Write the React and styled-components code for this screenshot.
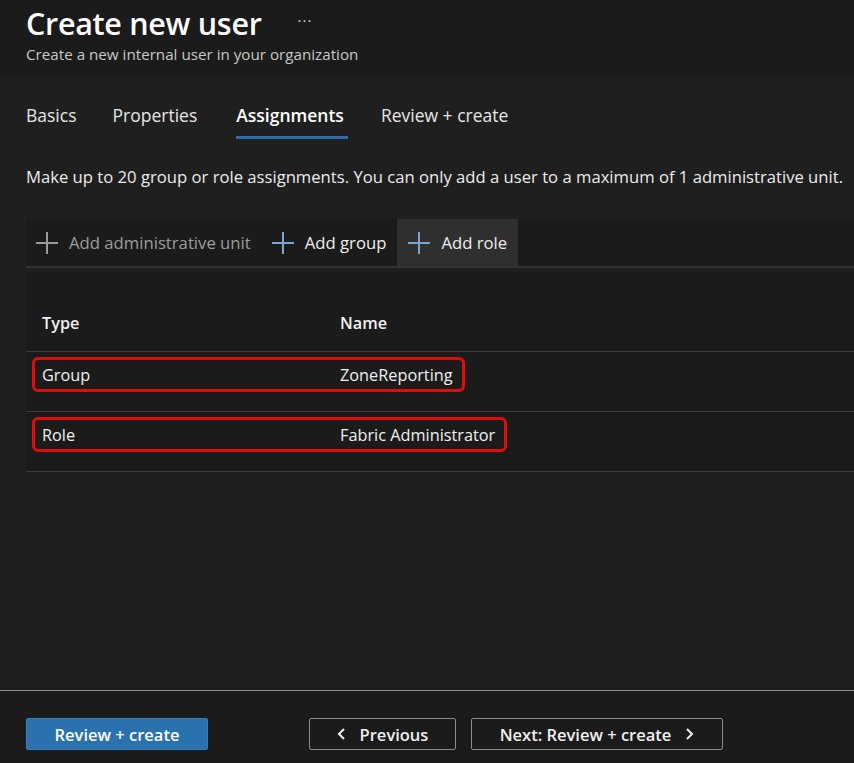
import React from 'react'
import styled, { createGlobalStyle } from 'styled-components'

const GlobalStyle = createGlobalStyle`
  html, body {
    margin: 0;
    padding: 0;
    background: #1f1f1f;
  }
  body {
    font-family: "Open Sans", "Liberation Sans", sans-serif;
    color: #f0f0f0;
  }
`

function PlusIcon({ color }) {
  return (
    <svg width="22" height="22" viewBox="0 0 22 22">
      <path d="M11 0v22M0 11h22" stroke={color} strokeWidth="2" fill="none" />
    </svg>
  )
}

function Chevron({ dir }) {
  return (
    <svg width="10" height="12" viewBox="0 0 10 12">
      <path
        d={dir === 'left' ? 'M7 1L2 6l5 5' : 'M3 1l5 5-5 5'}
        stroke="#f0f0f0"
        strokeWidth="2"
        fill="none"
      />
    </svg>
  )
}

export default function App() {
  const tabs = ['Basics', 'Properties', 'Assignments', 'Review + create']
  const rows = [
    { type: 'Group', name: 'ZoneReporting' },
    { type: 'Role', name: 'Fabric Administrator' },
  ]
  return (
    <>
      <GlobalStyle />
      <Page>
        <Header>
          <TitleRow>
            <Title>Create new user</Title>
            <More>···</More>
          </TitleRow>
          <Subtitle>Create a new internal user in your organization</Subtitle>
        </Header>

        <Content>
          <Tabs>
            {tabs.map(t => (
              <Tab key={t} active={t === 'Assignments'}>{t}</Tab>
            ))}
          </Tabs>

          <Description>
            Make up to 20 group or role assignments. You can only add a user to a maximum of 1 administrative unit.
          </Description>

          <Toolbar>
            <ToolButton disabled>
              <PlusIcon color="#9a9a9a" />
              Add administrative unit
            </ToolButton>
            <ToolButton>
              <PlusIcon color="#7aa7d0" />
              Add group
            </ToolButton>
            <ToolButton hovered>
              <PlusIcon color="#7aa7d0" />
              Add role
            </ToolButton>
          </Toolbar>

          <Table>
            <HeadRow>
              <TypeCell bold>Type</TypeCell>
              <Cell bold>Name</Cell>
            </HeadRow>
            {rows.map(r => (
              <Row key={r.type}>
                <Highlight>
                  <TypeCell>{r.type}</TypeCell>
                  <Cell>{r.name}</Cell>
                </Highlight>
              </Row>
            ))}
          </Table>
        </Content>

        <Footer>
          <PrimaryButton>Review + create</PrimaryButton>
          <NavButtons>
            <OutlineButton width="147px">
              <Chevron dir="left" />
              Previous
            </OutlineButton>
            <OutlineButton width="252px">
              Next: Review + create
              <Chevron dir="right" />
            </OutlineButton>
          </NavButtons>
        </Footer>
      </Page>
    </>
  )
}

const Page = styled.div`
  width: 854px;
  height: 763px;
  display: flex;
  flex-direction: column;
  overflow: hidden;
`

const Header = styled.header`
  background: #1b1b1b;
  height: 77px;
  padding: 0 26px;
  box-sizing: border-box;
`

const TitleRow = styled.div`
  display: flex;
  align-items: center;
  height: 46px;
`

const Title = styled.h1`
  margin: 0;
  font-size: 30.5px;
  font-weight: 600;
  color: #ffffff;
  letter-spacing: -0.3px;
`

const More = styled.span`
  margin-left: 36px;
  font-size: 15px;
  letter-spacing: 1px;
  color: #d0d0d0;
  margin-top: -6px;
`

const Subtitle = styled.div`
  font-size: 15.2px;
  color: #c8c8c8;
  margin-top: -2px;
`

const Content = styled.main`
  flex: 1;
  padding-left: 26px;
`

const Tabs = styled.nav`
  display: flex;
  gap: 36px;
  margin-top: 24px;
  height: 39px;
`

const Tab = styled.div`
  font-size: 17.5px;
  font-weight: ${p => (p.active ? 600 : 400)};
  color: ${p => (p.active ? '#ffffff' : '#e6e6e6')};
  box-sizing: border-box;
  height: 38px;
  line-height: 28px;
  margin: ${p => (p.active ? '0 -3px 0 3px' : '0')};
  padding-right: ${p => (p.active ? '4px' : '0')};
  border-bottom: 3px solid ${p => (p.active ? '#2f6ca8' : 'transparent')};
`

const Description = styled.p`
  margin: 25px 0 0;
  font-size: 16.65px;
  color: #ececec;
  height: 31px;
  white-space: nowrap;
`

const Toolbar = styled.div`
  display: flex;
  background: #1b1b1b;
  height: 47px;
  margin-top: 23px;
  border-bottom: 2px solid #333333;
`

const ToolButton = styled.div`
  display: flex;
  align-items: center;
  gap: 11px;
  padding: 0 11px;
  font-size: 16.7px;
  color: ${p => (p.disabled ? '#9d9d9d' : '#eeeeee')};
  background: ${p => (p.hovered ? '#2f2f2f' : 'transparent')};
  &:first-child {
    padding: 0 10px;
  }
`

const Table = styled.div`
  background: #1b1b1b;
  margin-top: 4px;
`

const HeadRow = styled.div`
  display: flex;
  align-items: flex-end;
  height: 80px;
  padding: 0 16px 17px;
  box-sizing: border-box;
  border-bottom: 1px solid #3c3c3c;
`

const Row = styled.div`
  display: flex;
  height: 60px;
  padding: 5px 6px 0;
  box-sizing: border-box;
  border-bottom: 1px solid #3c3c3c;
`

const Highlight = styled.div`
  display: inline-flex;
  align-items: center;
  box-sizing: border-box;
  height: 35px;
  padding: 1px 9px 0 7px;
  border: 3px solid #e00c0c;
  border-radius: 6px;
`

const TypeCell = styled.div`
  width: 298px;
  font-size: 16.3px;
  font-weight: ${p => (p.bold ? 600 : 400)};
  color: #f0f0f0;
`

const Cell = styled.div`
  font-size: 16.3px;
  font-weight: ${p => (p.bold ? 600 : 400)};
  color: #f0f0f0;
  white-space: nowrap;
`

const Footer = styled.footer`
  background: #1b1b1b;
  border-top: 1px solid #8a8a8a;
  display: flex;
  align-items: flex-start;
  padding: 27px 0 0 26px;
  box-sizing: border-box;
  height: 73px;
`

const PrimaryButton = styled.button`
  width: 182px;
  height: 32px;
  background: #2a72ae;
  border: 1px solid #3a7cb4;
  border-radius: 2px;
  color: #ffffff;
  font-family: inherit;
  font-size: 16.5px;
  font-weight: 600;
`

const NavButtons = styled.div`
  display: flex;
  gap: 15px;
  margin-left: 101px;
`

const OutlineButton = styled.button`
  width: ${p => p.width};
  height: 32px;
  display: flex;
  align-items: center;
  justify-content: center;
  gap: 13px;
  background: transparent;
  border: 1px solid #8a8a8a;
  border-radius: 2px;
  color: #f0f0f0;
  font-family: inherit;
  font-size: 16.5px;
  font-weight: 600;
`
